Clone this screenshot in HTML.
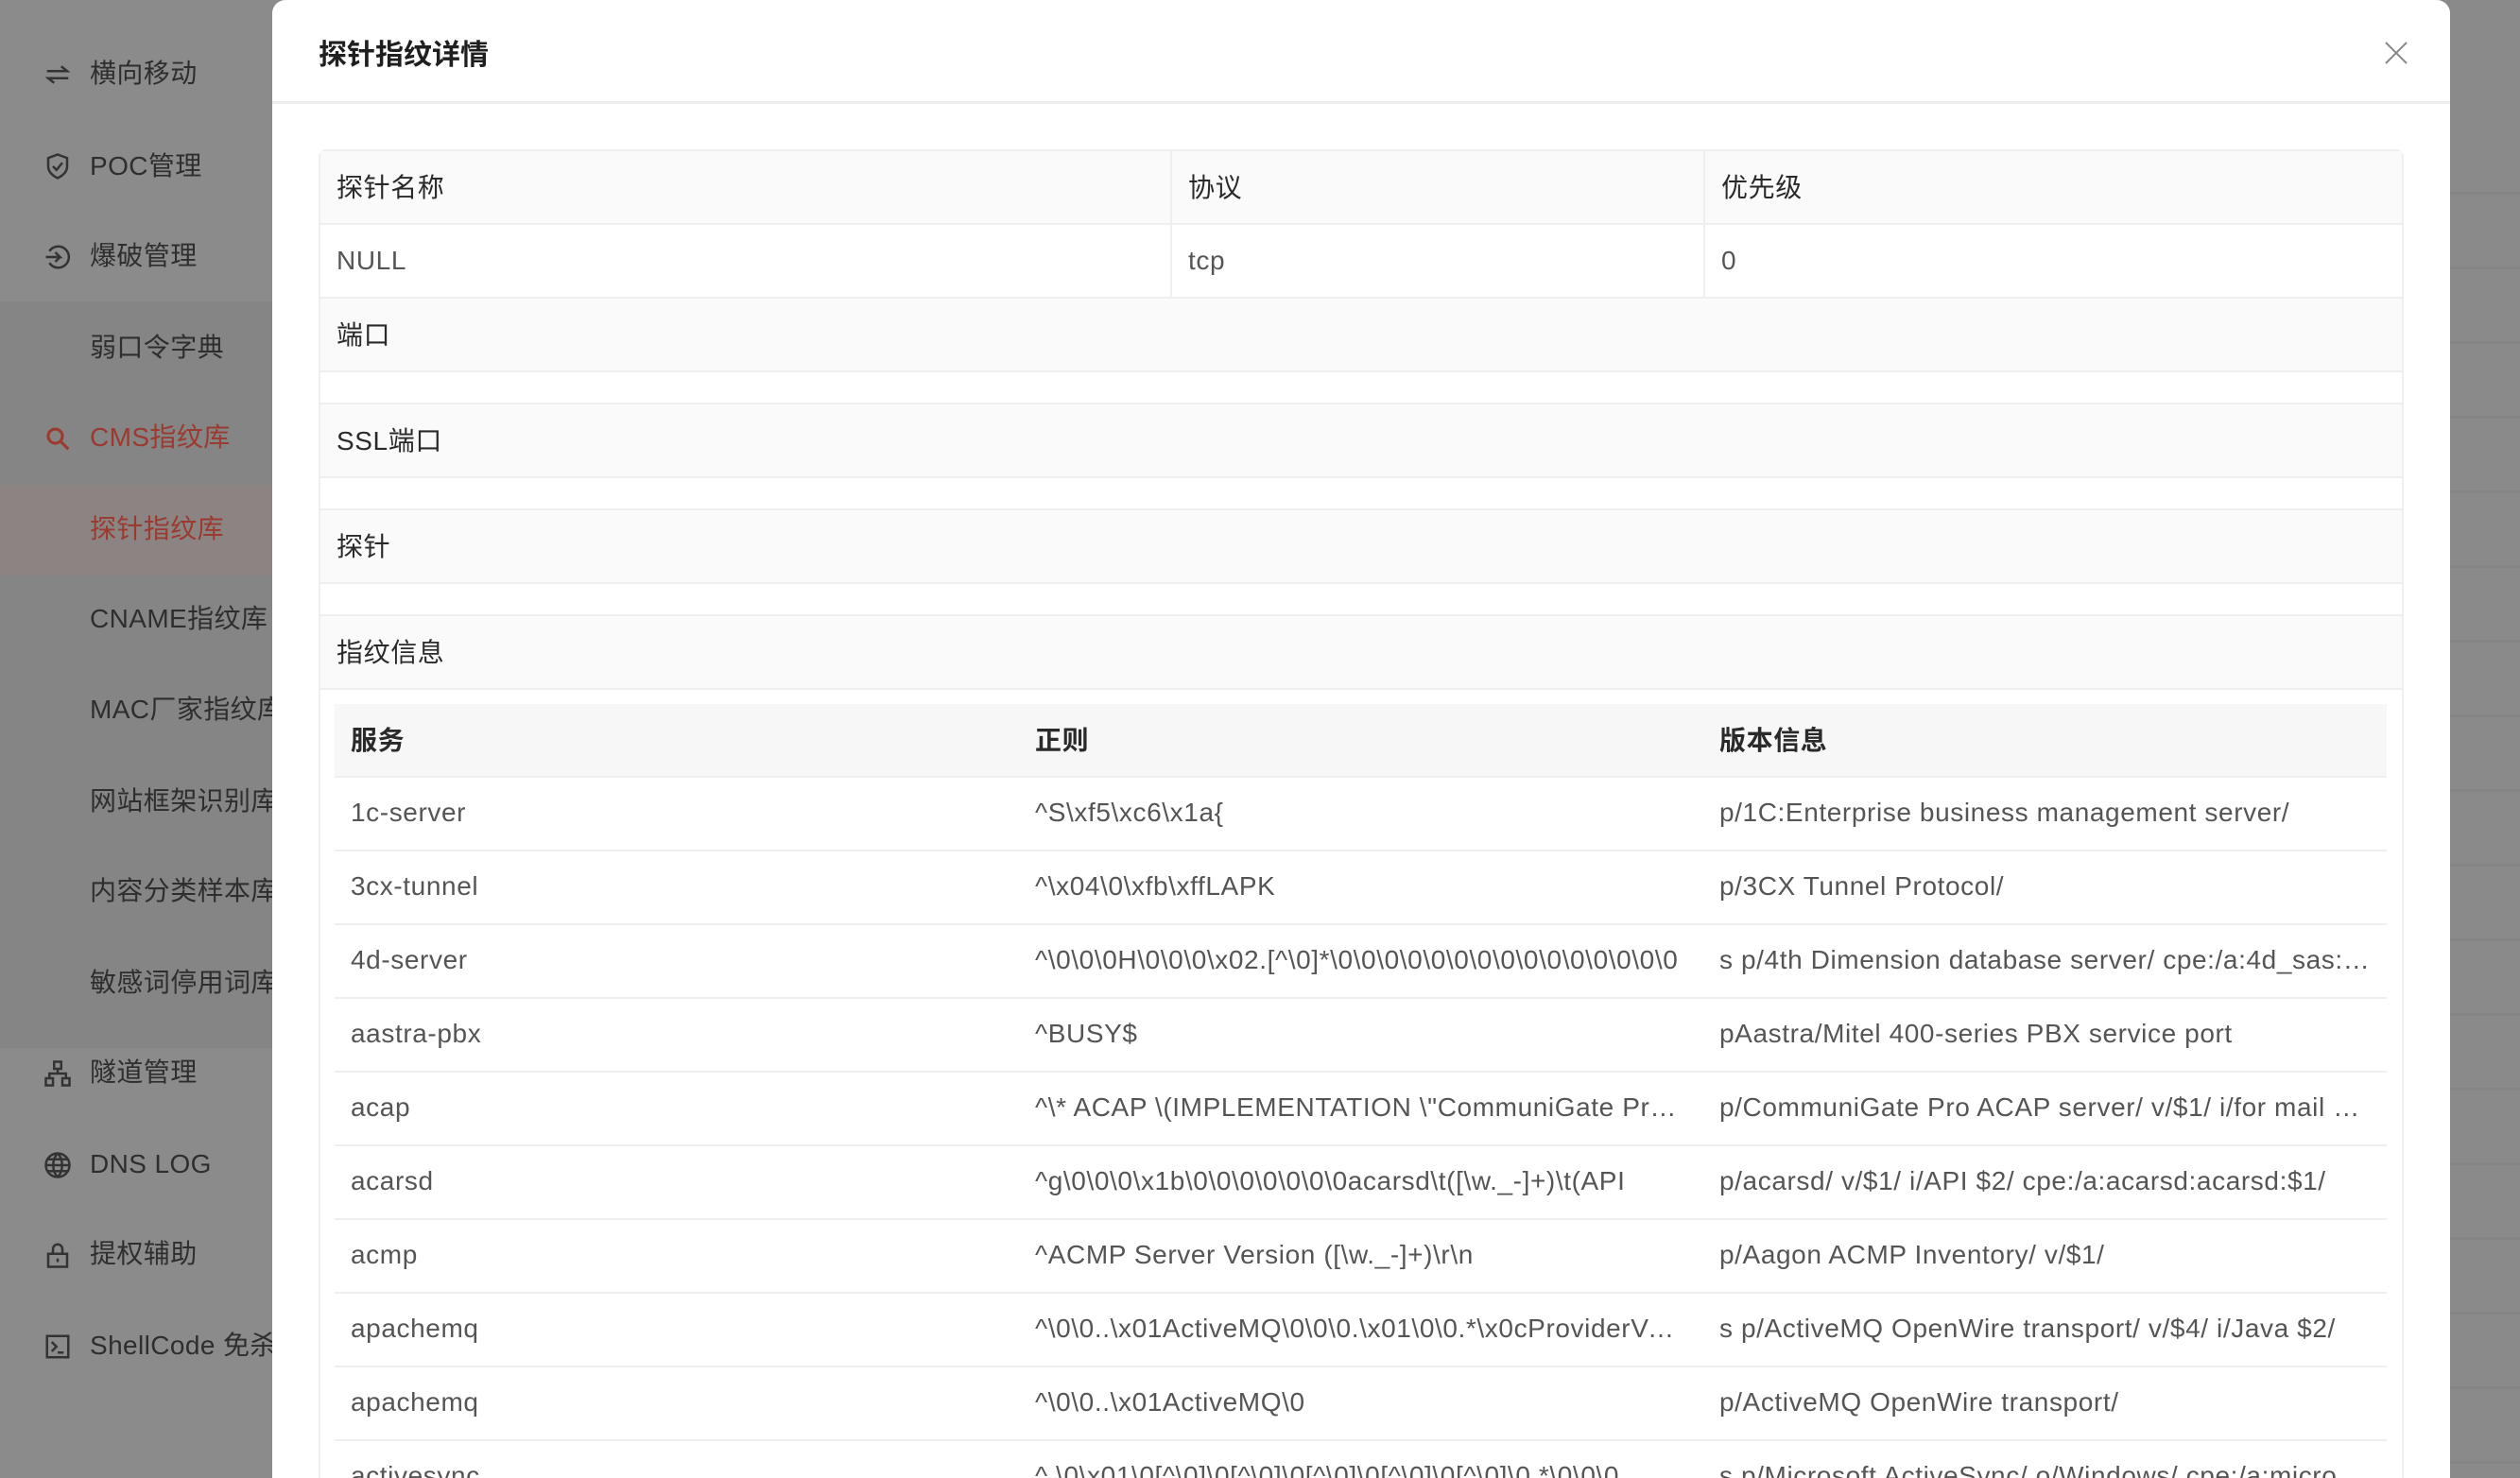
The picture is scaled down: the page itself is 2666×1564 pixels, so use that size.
<!DOCTYPE html>
<html><head><meta charset="utf-8">
<style>
*{margin:0;padding:0;box-sizing:border-box}
html,body{width:2666px;height:1564px;overflow:hidden}
body{background:#8a8a8a;font-family:"Liberation Sans","Noto Sans CJK SC",sans-serif;position:relative}
.sb{position:absolute;left:0;top:0;width:300px;height:1564px;background:#8b8b8b}
.sub{position:absolute;left:0;top:319px;width:300px;height:790px;background:#858585}
.sel{position:absolute;left:0;top:513px;width:300px;height:96px;background:#8c8483}
.mi{position:absolute;left:95px;font-size:28px;color:#2e2e2e;white-space:nowrap;line-height:40px;letter-spacing:0.4px}
.ic{position:absolute;left:46px;width:30px;height:30px}
.bgl{position:absolute;left:2592px;width:74px;height:3px;background:#858585}
.modal{position:absolute;left:288px;top:0;width:2304px;height:1564px;background:#fff;border-radius:14px 14px 0 0;overflow:hidden}
.title{position:absolute;left:49px;top:33px;font-size:30px;font-weight:bold;color:#1f1f1f}
.hd{position:absolute;left:0;top:107px;width:100%;height:3px;background:#eeeeee}
.x{position:absolute;left:2235px;top:44px;width:24px;height:24px}
.c{position:absolute;font-size:28px;letter-spacing:0.6px;line-height:78px;height:78px;padding:0 17px;white-space:nowrap;overflow:hidden;text-overflow:ellipsis;color:#555}
.lab{background:#fafafa;color:#2a2a2a}
.hl{position:absolute;height:2px;background:#efefef}
.vl{position:absolute;width:2px;background:#efefef}
.ih{color:#2a2a2a;font-weight:bold;background:#f7f7f7}
</style></head><body>
<div class="sb"></div><div class="sub"></div><div class="sel"></div>
<div class="bgl" style="top:203px"></div><div class="bgl" style="top:282px"></div><div class="bgl" style="top:361px"></div><div class="bgl" style="top:440px"></div><div class="bgl" style="top:519px"></div><div class="bgl" style="top:598px"></div><div class="bgl" style="top:677px"></div><div class="bgl" style="top:756px"></div><div class="bgl" style="top:835px"></div><div class="bgl" style="top:914px"></div><div class="bgl" style="top:993px"></div><div class="bgl" style="top:1072px"></div><div class="bgl" style="top:1151px"></div><div class="bgl" style="top:1230px"></div><div class="bgl" style="top:1309px"></div><div class="bgl" style="top:1388px"></div><div class="bgl" style="top:1467px"></div><div class="bgl" style="top:1546px"></div>

<svg class="ic" style="top:64px" viewBox="0 0 24 24" fill="none" stroke="#333" stroke-width="2"><path d="M3 9h17l-5-4M21 15H4l5 4"/></svg>
<div class="mi" style="top:58px">横向移动</div>
<svg class="ic" style="top:161px" viewBox="0 0 24 24" fill="none" stroke="#333" stroke-width="2"><path d="M12 2l8 3v7c0 5-4 8-8 10-4-2-8-5-8-10V5z"/><path d="M8 12l3 3 5-6"/></svg>
<div class="mi" style="top:156px">POC管理</div>
<svg class="ic" style="top:257px" viewBox="0 0 24 24" fill="none" stroke="#333" stroke-width="2"><path d="M5 7a9 9 0 1 1 0 10M2 12h12l-4-4M14 12l-4 4"/></svg>
<div class="mi" style="top:251px">爆破管理</div>
<div class="mi" style="top:348px">弱口令字典</div>
<svg class="ic" style="top:449px" viewBox="0 0 24 24" fill="none" stroke="#9a3a30" stroke-width="2.5"><circle cx="10" cy="10" r="6"/><path d="M15 15l6 6"/></svg>
<div class="mi" style="top:443px;color:#9a3a30">CMS指纹库</div>
<div class="mi" style="top:540px;color:#9a3a30">探针指纹库</div>
<div class="mi" style="top:635px">CNAME指纹库</div>
<div class="mi" style="top:731px">MAC厂家指纹库</div>
<div class="mi" style="top:828px">网站框架识别库</div>
<div class="mi" style="top:923px">内容分类样本库</div>
<div class="mi" style="top:1020px">敏感词停用词库</div>
<svg class="ic" style="top:1121px" viewBox="0 0 24 24" fill="none" stroke="#333" stroke-width="2"><rect x="9" y="2" width="6" height="6"/><rect x="2" y="16" width="6" height="6"/><rect x="16" y="16" width="6" height="6"/><path d="M12 8v4M5 16v-4h14v4"/></svg>
<div class="mi" style="top:1115px">隧道管理</div>
<svg class="ic" style="top:1218px" viewBox="0 0 24 24" fill="none" stroke="#333" stroke-width="2"><circle cx="12" cy="12" r="10"/><path d="M2 12h20M12 2c-5 5-5 15 0 20M12 2c5 5 5 15 0 20M4 7h16M4 17h16"/></svg>
<div class="mi" style="top:1212px">DNS LOG</div>
<svg class="ic" style="top:1313px" viewBox="0 0 24 24" fill="none" stroke="#333" stroke-width="2"><rect x="4" y="11" width="16" height="11"/><path d="M8 11V7a4 4 0 0 1 8 0v4M12 15v3"/></svg>
<div class="mi" style="top:1307px">提权辅助</div>
<svg class="ic" style="top:1410px" viewBox="0 0 24 24" fill="none" stroke="#333" stroke-width="2"><rect x="3" y="3" width="18" height="18"/><path d="M7 8l4 4-4 4M12 17h5"/></svg>
<div class="mi" style="top:1404px">ShellCode 免杀</div>

<div class="modal">
<div class="title">探针指纹详情</div>
<svg class="x" viewBox="0 0 24 24" stroke="#888" stroke-width="2"><path d="M1 1l22 22M23 1L1 23"/></svg>
<div class="hd"></div>

<div style="position:absolute;left:49px;top:158px;width:2206px;height:1500px;border:2px solid #efefef;border-radius:8px 8px 0 0"></div>
<div class="c lab" style="left:51px;top:160px;width:899px;height:76px">探针名称</div>
<div class="c lab" style="left:952px;top:160px;width:562px;height:76px">协议</div>
<div class="c lab" style="left:1516px;top:160px;width:737px;height:76px">优先级</div>
<div class="c" style="left:51px;top:237px;width:899px">NULL</div>
<div class="c" style="left:952px;top:237px;width:562px">tcp</div>
<div class="c" style="left:1516px;top:237px;width:737px">0</div>
<div class="vl" style="left:950px;top:160px;height:154px"></div>
<div class="vl" style="left:1514px;top:160px;height:154px"></div>
<div class="hl" style="left:49px;top:236px;width:2206px"></div>
<div class="hl" style="left:49px;top:314px;width:2206px"></div>
<div class="c lab" style="left:51px;top:316px;width:2202px;height:76px">端口</div>
<div class="hl" style="left:49px;top:392px;width:2206px"></div>
<div class="hl" style="left:49px;top:426px;width:2206px"></div>
<div class="c lab" style="left:51px;top:428px;width:2202px;height:76px">SSL端口</div>
<div class="hl" style="left:49px;top:504px;width:2206px"></div>
<div class="hl" style="left:49px;top:538px;width:2206px"></div>
<div class="c lab" style="left:51px;top:540px;width:2202px;height:76px">探针</div>
<div class="hl" style="left:49px;top:616px;width:2206px"></div>
<div class="hl" style="left:49px;top:650px;width:2206px"></div>
<div class="c lab" style="left:51px;top:652px;width:2202px;height:76px">指纹信息</div>
<div class="hl" style="left:49px;top:728px;width:2206px"></div>

<div style="position:absolute;left:66px;top:745px;width:2171px;height:78px;background:#f7f7f7;border-radius:8px 8px 0 0"></div>
<div class="c ih" style="left:66px;top:745px;width:724px">服务</div>
<div class="c ih" style="left:790px;top:745px;width:724px">正则</div>
<div class="c ih" style="left:1514px;top:745px;width:723px">版本信息</div>

<div style="position:absolute;left:66px;top:821px;width:2171px">
<div style="position:relative;height:78px;border-top:2px solid #efefef"><div class="c" style="left:0;top:-2px;width:724px">1c-server</div><div class="c" style="left:724px;top:-2px;width:724px">^S\xf5\xc6\x1a{</div><div class="c" style="left:1448px;top:-2px;width:723px">p/1C:Enterprise business management server/</div></div>
<div style="position:relative;height:78px;border-top:2px solid #efefef"><div class="c" style="left:0;top:-2px;width:724px">3cx-tunnel</div><div class="c" style="left:724px;top:-2px;width:724px">^\x04\0\xfb\xffLAPK</div><div class="c" style="left:1448px;top:-2px;width:723px">p/3CX Tunnel Protocol/</div></div>
<div style="position:relative;height:78px;border-top:2px solid #efefef"><div class="c" style="left:0;top:-2px;width:724px">4d-server</div><div class="c" style="left:724px;top:-2px;width:724px">^\0\0\0H\0\0\0\x02.[^\0]*\0\0\0\0\0\0\0\0\0\0\0\0\0\0\0</div><div class="c" style="left:1448px;top:-2px;width:723px">s p/4th Dimension database server/ cpe:/a:4d_sas:4d/</div></div>
<div style="position:relative;height:78px;border-top:2px solid #efefef"><div class="c" style="left:0;top:-2px;width:724px">aastra-pbx</div><div class="c" style="left:724px;top:-2px;width:724px">^BUSY$</div><div class="c" style="left:1448px;top:-2px;width:723px">pAastra/Mitel 400-series PBX service port</div></div>
<div style="position:relative;height:78px;border-top:2px solid #efefef"><div class="c" style="left:0;top:-2px;width:724px">acap</div><div class="c" style="left:724px;top:-2px;width:724px">^\* ACAP \(IMPLEMENTATION \"CommuniGate Pro ACAP</div><div class="c" style="left:1448px;top:-2px;width:723px">p/CommuniGate Pro ACAP server/ v/$1/ i/for mail client prefs</div></div>
<div style="position:relative;height:78px;border-top:2px solid #efefef"><div class="c" style="left:0;top:-2px;width:724px">acarsd</div><div class="c" style="left:724px;top:-2px;width:724px">^g\0\0\0\x1b\0\0\0\0\0\0\0acarsd\t([\w._-]+)\t(API</div><div class="c" style="left:1448px;top:-2px;width:723px">p/acarsd/ v/$1/ i/API $2/ cpe:/a:acarsd:acarsd:$1/</div></div>
<div style="position:relative;height:78px;border-top:2px solid #efefef"><div class="c" style="left:0;top:-2px;width:724px">acmp</div><div class="c" style="left:724px;top:-2px;width:724px">^ACMP Server Version ([\w._-]+)\r\n</div><div class="c" style="left:1448px;top:-2px;width:723px">p/Aagon ACMP Inventory/ v/$1/</div></div>
<div style="position:relative;height:78px;border-top:2px solid #efefef"><div class="c" style="left:0;top:-2px;width:724px">apachemq</div><div class="c" style="left:724px;top:-2px;width:724px">^\0\0..\x01ActiveMQ\0\0\0.\x01\0\0.*\x0cProviderVersion</div><div class="c" style="left:1448px;top:-2px;width:723px">s p/ActiveMQ OpenWire transport/ v/$4/ i/Java $2/</div></div>
<div style="position:relative;height:78px;border-top:2px solid #efefef"><div class="c" style="left:0;top:-2px;width:724px">apachemq</div><div class="c" style="left:724px;top:-2px;width:724px">^\0\0..\x01ActiveMQ\0</div><div class="c" style="left:1448px;top:-2px;width:723px">p/ActiveMQ OpenWire transport/</div></div>
<div style="position:relative;height:78px;border-top:2px solid #efefef"><div class="c" style="left:0;top:-2px;width:724px">activesync</div><div class="c" style="left:724px;top:-2px;width:724px">^.\0\x01\0[^\0]\0[^\0]\0[^\0]\0[^\0]\0[^\0]\0.*\0\0\0</div><div class="c" style="left:1448px;top:-2px;width:723px">s p/Microsoft ActiveSync/ o/Windows/ cpe:/a:microsoft</div></div>
</div>
</div>
</body></html>
